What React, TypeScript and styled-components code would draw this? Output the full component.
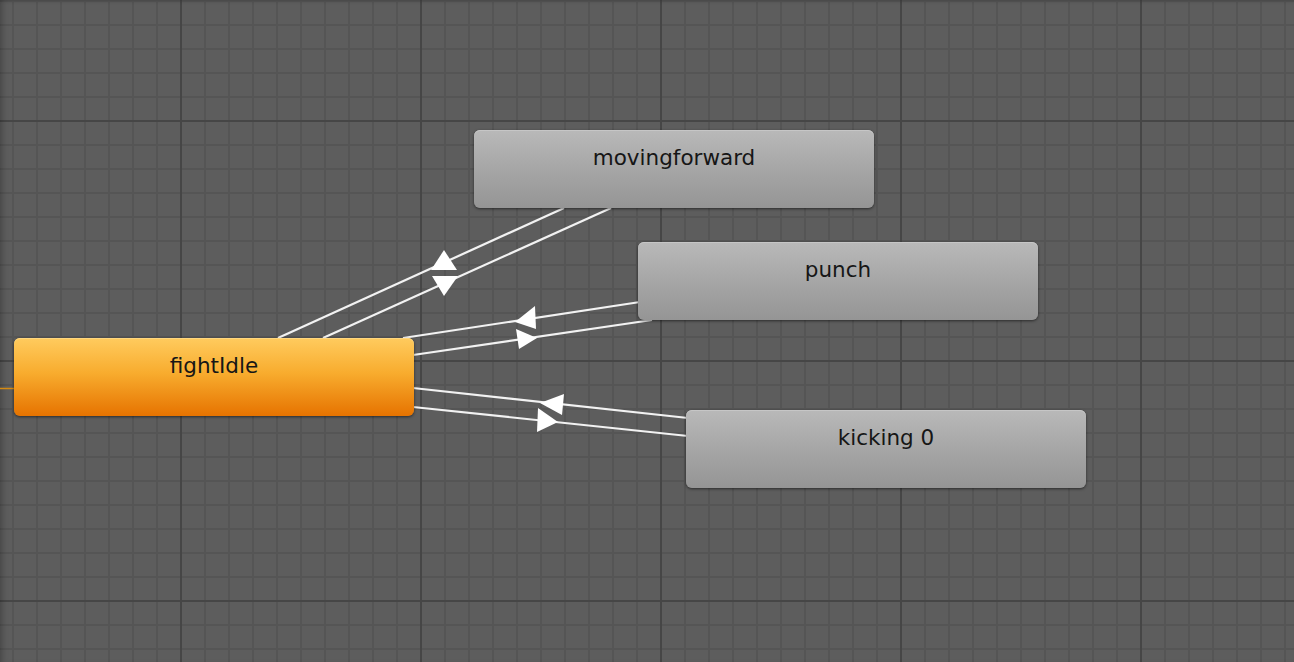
import React from "react";
import styled, { createGlobalStyle } from "styled-components";

const Global = createGlobalStyle`
  html, body { margin: 0; padding: 0; background: #5d5d5d; }
  #root { width: 1294px; height: 662px; }
`;

const Canvas = styled.div`
  position: relative;
  width: 1294px;
  height: 662px;
  overflow: hidden;
  background-color: #5d5d5d;
  background-image:
    linear-gradient(to right, #464646 2px, transparent 2px),
    linear-gradient(to bottom, #464646 2px, transparent 2px),
    linear-gradient(to right, #555555 2px, transparent 2px),
    linear-gradient(to bottom, #555555 2px, transparent 2px);
  background-size: 240px 100%, 100% 240px, 24px 100%, 100% 24px;
  background-position: 180px 0, 0 120px, 12px 0, 0 0;
  box-shadow: inset 6px 0 6px -4px rgba(0, 0, 0, 0.25), inset 0 4px 4px -3px rgba(0, 0, 0, 0.15);
  font-family: "DejaVu Sans", Verdana, sans-serif;
`;

const Edges = styled.svg`
  position: absolute;
  left: 0;
  top: 0;
  width: 1294px;
  height: 662px;
`;

type NodeProps = { $x: number; $y: number; $active?: boolean };

const StateNode = styled.div<NodeProps>`
  position: absolute;
  left: ${(p) => p.$x}px;
  top: ${(p) => p.$y}px;
  width: 400px;
  height: 78px;
  box-sizing: border-box;
  border-radius: 6px;
  padding-top: 15px;
  display: flex;
  justify-content: center;
  align-items: flex-start;
  font-size: 21.5px;
  line-height: 26px;
  color: #161616;
  background: ${(p) =>
    p.$active
      ? "linear-gradient(to bottom, #ffcb5e 0%, #f8ac2e 45%, #e67300 100%)"
      : "linear-gradient(to bottom, #b9b9b9 0%, #a6a6a6 50%, #959595 100%)"};
  box-shadow: inset 0 1px 0 ${(p) => (p.$active ? "#ffd77f" : "#c6c6c6")},
    0 1px 3px rgba(0, 0, 0, 0.55);
`;

type Edge = { x1: number; y1: number; x2: number; y2: number; tri: string };

const edges: Edge[] = [
  { x1: 278, y1: 338, x2: 564, y2: 208, tri: "444,250 431,270 457,270" },
  { x1: 323, y1: 338, x2: 611, y2: 208, tri: "432,276 458,276 444,296" },
  { x1: 403, y1: 338, x2: 640, y2: 302, tri: "515,322 535,306 536,329" },
  { x1: 413, y1: 355, x2: 652, y2: 320, tri: "516,329 519,349 537,338" },
  { x1: 413, y1: 388, x2: 688, y2: 418, tri: "540,403 564,394 562,415" },
  { x1: 413, y1: 407, x2: 688, y2: 436, tri: "538,408 537,432 558,422" },
];

export default function App() {
  return (
    <>
      <Global />
      <Canvas>
        <Edges viewBox="0 0 1294 662">
          <line x1={0} y1={388.5} x2={16} y2={388.5} stroke="#d48a12" strokeWidth={1.5} />
          {edges.map((e, i) => (
            <g key={i}>
              <line x1={e.x1} y1={e.y1} x2={e.x2} y2={e.y2} stroke="#f2f2f2" strokeWidth={2.2} />
              <polygon points={e.tri} fill="#ffffff" />
            </g>
          ))}
        </Edges>
        <StateNode $x={474} $y={130}>movingforward</StateNode>
        <StateNode $x={638} $y={242}>punch</StateNode>
        <StateNode $x={14} $y={338} $active>fightIdle</StateNode>
        <StateNode $x={686} $y={410}>kicking 0</StateNode>
      </Canvas>
    </>
  );
}
